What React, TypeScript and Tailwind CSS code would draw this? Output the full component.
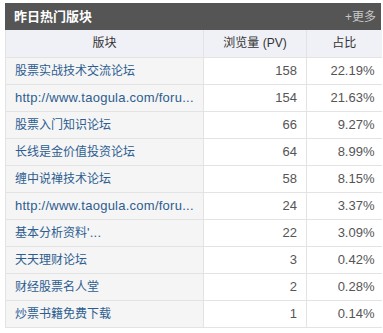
const rows: [string, number, string][] = [
  ["股票实战技术交流论坛", 158, "22.19%"],
  ["http://www.taogula.com/foru...", 154, "21.63%"],
  ["股票入门知识论坛", 66, "9.27%"],
  ["长线是金价值投资论坛", 64, "8.99%"],
  ["缠中说禅技术论坛", 58, "8.15%"],
  ["http://www.taogula.com/foru...", 24, "3.37%"],
  ["基本分析资料'...", 22, "3.09%"],
  ["天天理财论坛", 3, "0.42%"],
  ["财经股票名人堂", 2, "0.28%"],
  ["炒票书籍免费下载", 1, "0.14%"],
];

// CJK glyphs run at 12px, latin at 13px like the original page
function Mixed({ text }: { text: string }) {
  const parts = text.split(/([\u4e00-\u9fff]+)/).filter(Boolean);
  return (
    <>
      {parts.map((p, i) =>
        /[\u4e00-\u9fff]/.test(p) ? (
          <span key={i} className="text-[12px]">{p}</span>
        ) : (
          <span key={i} className="text-[13px] tracking-[0.25px]">{p}</span>
        )
      )}
    </>
  );
}

export default function App() {
  return (
    <div
      className="min-h-[333px] bg-white pl-[5px] pt-[3px]"
      style={{ fontFamily: '"Liberation Sans", "Noto Sans CJK SC", sans-serif' }}
    >
      <div className="w-[376px]">
        {/* title bar */}
        <div className="flex h-[27px] items-center justify-between bg-[#555555] pl-[9px] pr-[5px]">
          <span className="text-[13px] font-bold text-white">昨日热门版块</span>
          <a className="text-[12px] text-[#c8c8c8]">+更多</a>
        </div>

        <table className="w-full table-fixed border-collapse text-[12px]">
          <colgroup>
            <col className="w-[198px]" />
            <col className="w-[103px]" />
            <col className="w-[75px]" />
          </colgroup>
          <thead>
            <tr className="h-[27px] bg-[#f0f1f7] text-[#333333]">
              <th className="border-b border-l border-[#e3e3e3] font-normal">版块</th>
              <th className="border-b border-l border-[#e3e3e3] font-normal">浏览量 (PV)</th>
              <th className="border-b border-l border-[#e3e3e3] font-normal">占比</th>
            </tr>
          </thead>
          <tbody>
            {rows.map(([name, pv, pct], i) => (
              <tr key={i} className="h-[27px]">
                <td className="overflow-hidden whitespace-nowrap border-b border-l border-[#e3e3e3] bg-[#f5f5f5] pl-[9px] text-[#2d5d90]">
                  <Mixed text={name} />
                </td>
                <td className="border-b border-l border-[#e3e3e3] bg-white pr-[9px] text-right text-[13px] text-[#555555]">
                  {pv}
                </td>
                <td className="border-b border-l border-[#e3e3e3] bg-white pr-[7px] text-right text-[13px] text-[#555555]">
                  {pct}
                </td>
              </tr>
            ))}
          </tbody>
        </table>
      </div>
    </div>
  );
}
